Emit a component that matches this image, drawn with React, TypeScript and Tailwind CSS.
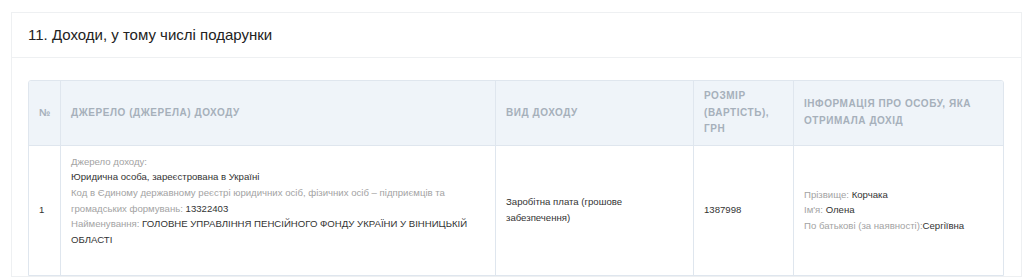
import React from "react";

export default function App() {
  const th =
    "border-r border-[#dfe6ee] px-[10px] py-[7px] text-left align-middle text-[10px] font-bold uppercase leading-[16.5px] tracking-[0.55px] text-[#a6b0bb]";
  const td = "border-r border-[#dfe6ee] px-[10px] align-middle text-[9.6px] leading-[15.7px] text-[#333]";
  return (
    <div
      className="min-h-[278px] bg-white pl-[11px] pr-[2px] pt-[12px]"
      style={{ fontFamily: '"Liberation Sans", Arial, sans-serif' }}
    >
      <div className="border border-[#eef0f2] bg-white">
        <div className="flex h-[45px] items-center border-b border-[#eef0f2] px-[16px] text-[15px] text-[#222]">
          11. Доходи, у тому числі подарунки
        </div>
        <div className="pl-[16px] pr-[17px] pt-[22px]">
          <table className="w-full table-fixed border-separate border-spacing-0 overflow-hidden rounded-t-[3px] border border-[#dfe6ee]">
            <colgroup>
              <col className="w-[32px]" />
              <col className="w-[435px]" />
              <col className="w-[198px]" />
              <col className="w-[100px]" />
              <col />
            </colgroup>
            <thead>
              <tr className="h-[64px] bg-[#eff4f9]">
                <th className={th + " border-b"}>№</th>
                <th className={th + " border-b"}>Джерело (джерела) доходу</th>
                <th className={th + " border-b"}>Вид доходу</th>
                <th className={th + " border-b"}>Розмір (вартість), грн</th>
                <th className={th + " border-b border-r-0"}>Інформація про особу, яка отримала дохід</th>
              </tr>
            </thead>
            <tbody>
              <tr>
                <td className={td}>1</td>
                <td className={td + " pb-[27px] pt-[8px]"}>
                  <div className="text-[#a3a3a3]">Джерело доходу:</div>
                  <div>Юридична особа, зареєстрована в Україні</div>
                  <div>
                    <span className="text-[#a3a3a3]">
                      Код в Єдиному державному реєстрі юридичних осіб, фізичних осіб – підприємців та громадських
                      формувань:{" "}
                    </span>
                    13322403
                  </div>
                  <div>
                    <span className="text-[#a3a3a3]">Найменування: </span>
                    ГОЛОВНЕ УПРАВЛІННЯ ПЕНСІЙНОГО ФОНДУ УКРАЇНИ У ВІННИЦЬКІЙ ОБЛАСТІ
                  </div>
                </td>
                <td className={td}>Заробітна плата (грошове забезпечення)</td>
                <td className={td}>1387998</td>
                <td className={td + " border-r-0"}>
                  <div>
                    <span className="text-[#a3a3a3]">Прізвище: </span>Корчака
                  </div>
                  <div>
                    <span className="text-[#a3a3a3]">Ім'я: </span>Олена
                  </div>
                  <div>
                    <span className="text-[#a3a3a3]">По батькові (за наявності):</span>Сергіївна
                  </div>
                </td>
              </tr>
            </tbody>
          </table>
        </div>
      </div>
    </div>
  );
}
